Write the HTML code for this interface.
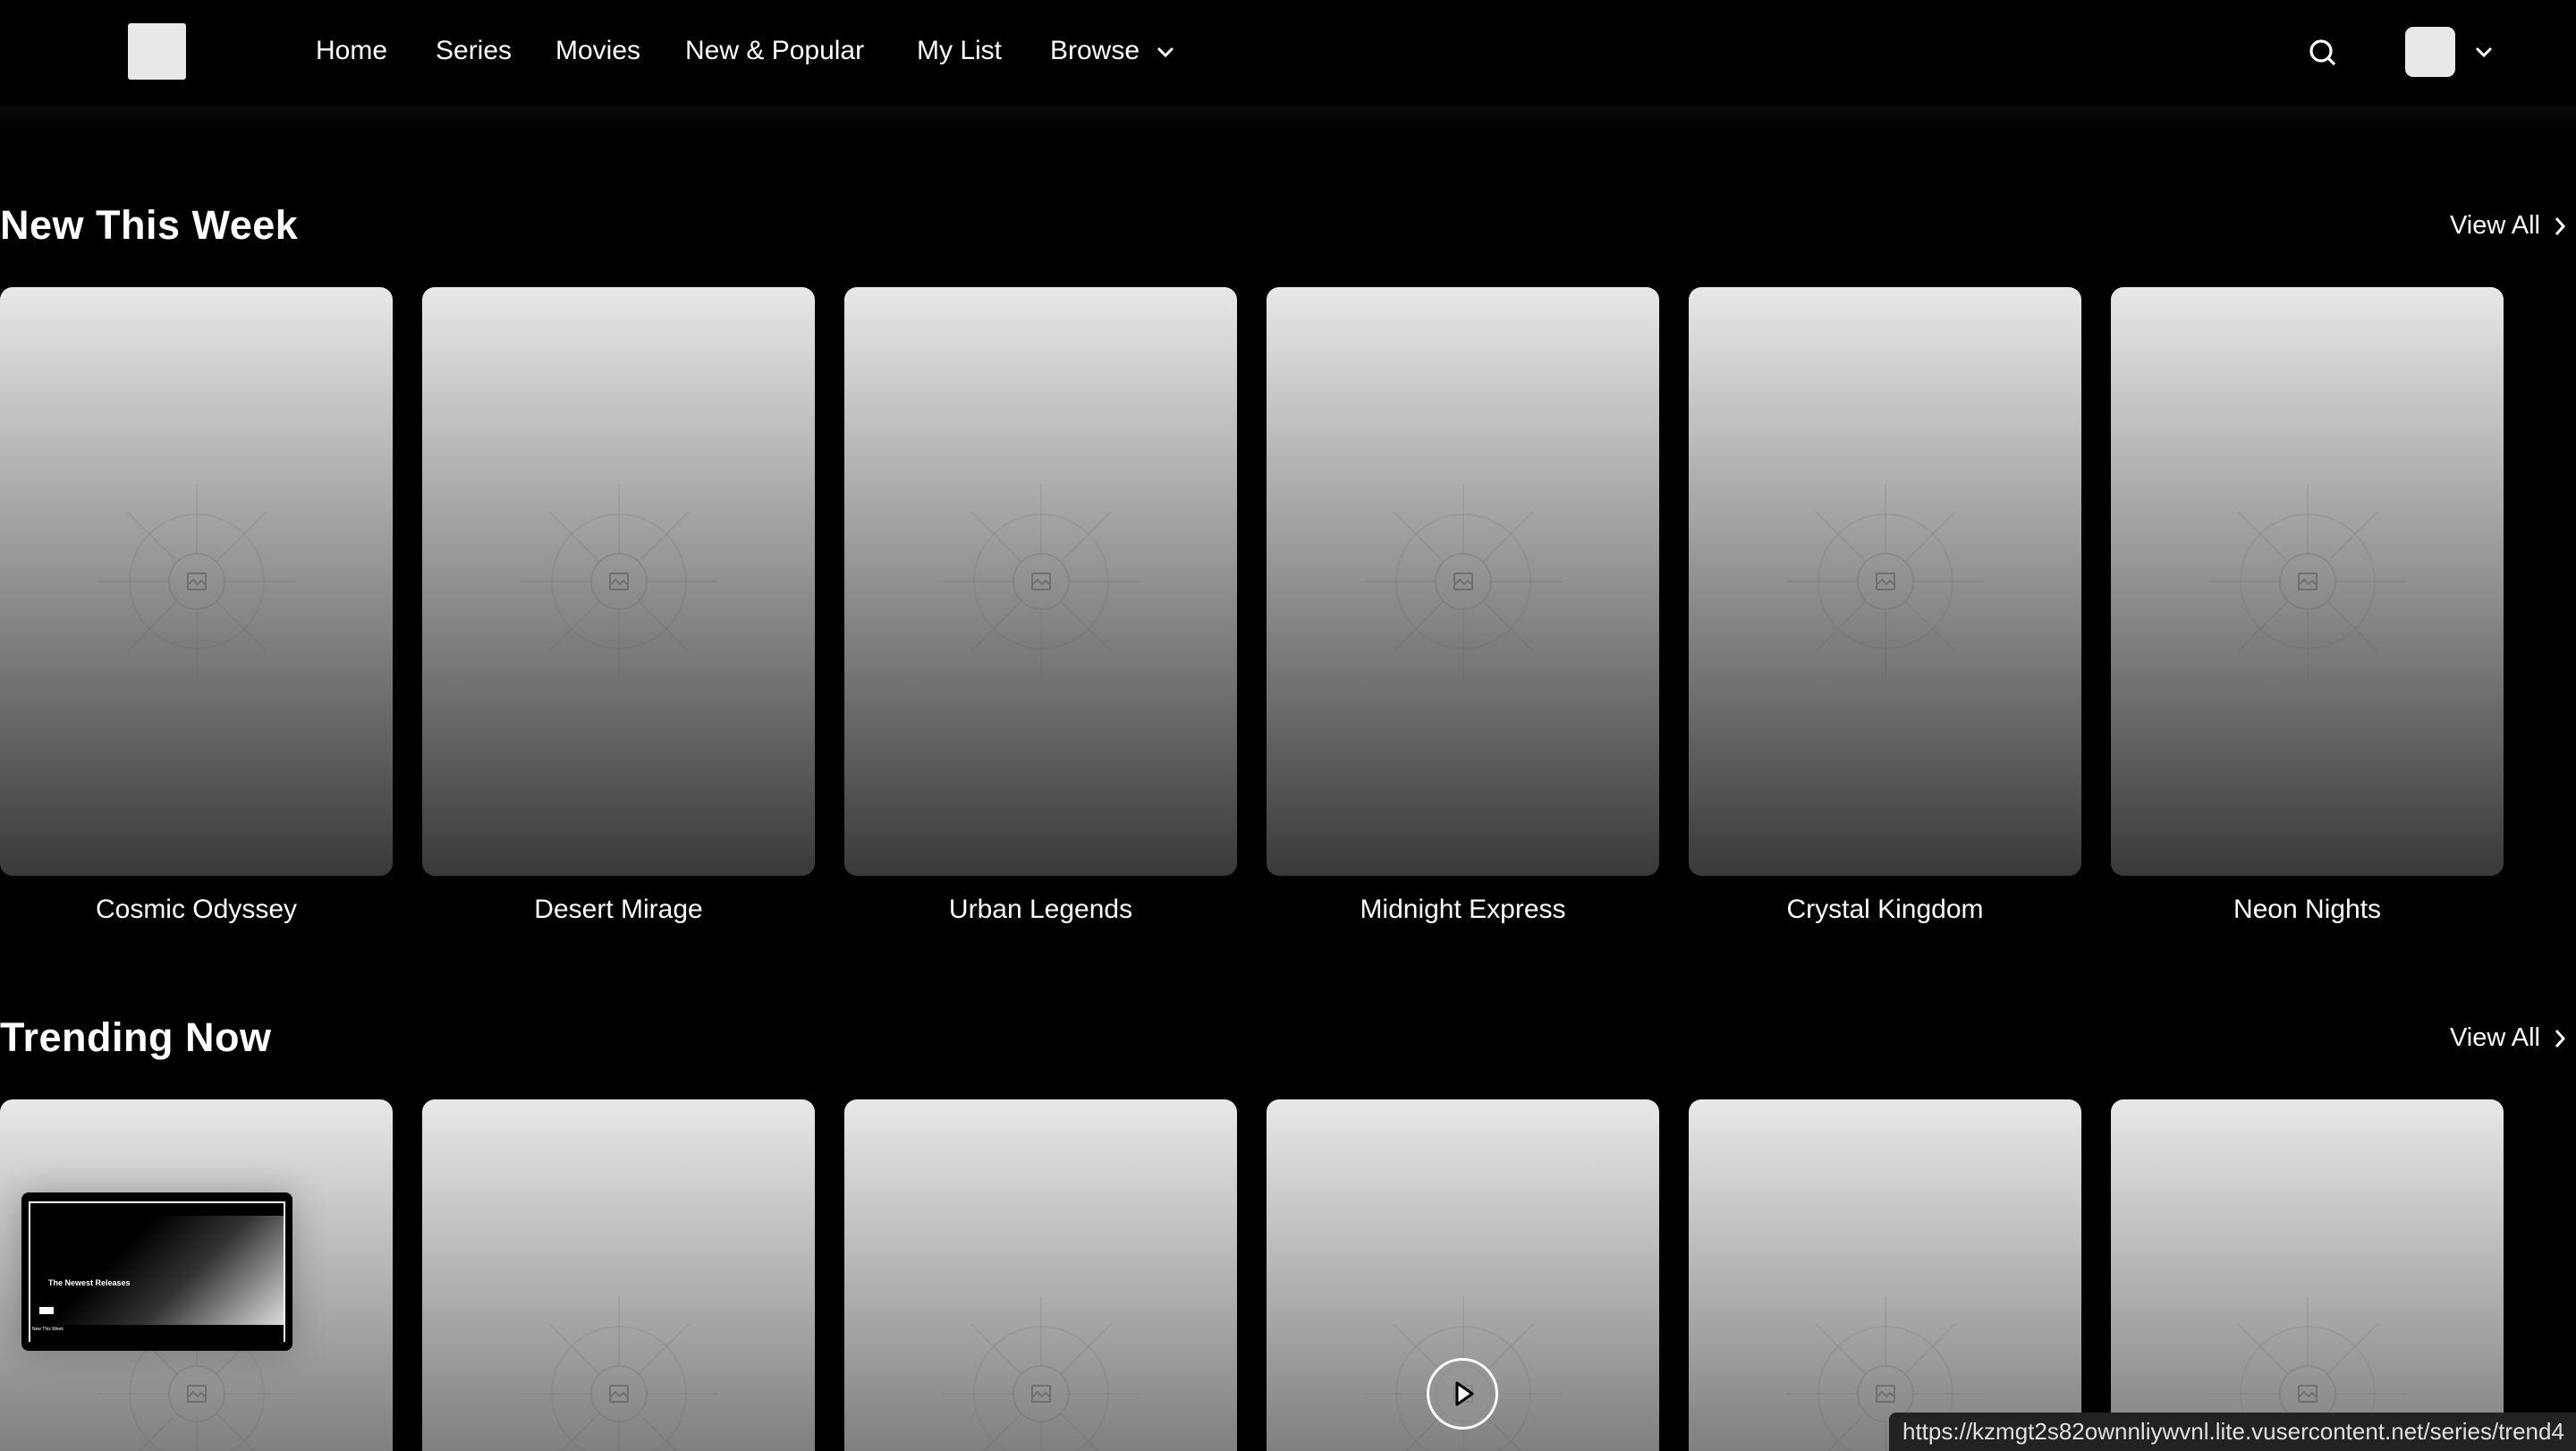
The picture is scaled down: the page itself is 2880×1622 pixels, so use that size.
<!DOCTYPE html>
<html><head><meta charset="utf-8"><style>
*{margin:0;padding:0;box-sizing:border-box}
html,body{width:2880px;height:1622px;background:#000;overflow:hidden;font-family:"Liberation Sans",sans-serif;color:#fff}
#wrap{position:relative;width:2880px;height:1622px;overflow:hidden;background:#000}
.hdr{position:absolute;left:0;top:0;width:2880px;height:118px;background:#000}
.shade{position:absolute;left:0;top:112px;width:2880px;height:40px;background:linear-gradient(#0a0a0a,#000)}
.logo{position:absolute;left:143px;top:26px;width:65px;height:63px;background:#e8e8e8;border-radius:3px}
.nav{position:absolute;top:38px;font-size:30px;line-height:38px;color:#fff}
.ttl{position:absolute;left:0;font-size:45px;font-weight:bold;letter-spacing:0.5px}
.va{position:absolute;right:40px;font-size:29px}
.chev{position:absolute}
.card{position:absolute;width:439px;height:658px;border-radius:14px;background:linear-gradient(#e8e8e8,#393939);background-size:439px 658px;background-repeat:no-repeat;overflow:hidden}
.card.b{height:393px;border-radius:14px 14px 0 0}
.card svg{position:absolute;left:0;top:0}
.name{position:absolute;width:439px;text-align:center;font-size:30px;top:1000px}
</style></head><body><div id="wrap">
<div class="shade"></div>
<div class="hdr"></div>
<div class="logo"></div>
<div class="nav" style="left:353px">Home</div>
<div class="nav" style="left:487px">Series</div>
<div class="nav" style="left:621px">Movies</div>
<div class="nav" style="left:766px">New &amp; Popular</div>
<div class="nav" style="left:1025px">My List</div>
<div class="nav" style="left:1174px">Browse</div>
<svg class="chev" style="left:1292px;top:48px" width="22" height="20" viewBox="0 0 22 20"><path d="M3 6l8 8 8-8" stroke="#fff" stroke-width="3" fill="none"/></svg>
<svg class="chev" style="left:2580px;top:42px" width="34" height="34" viewBox="0 0 34 34"><circle cx="15" cy="15" r="11" stroke="#fff" stroke-width="3.2" fill="none"/><path d="M23 23l7 7" stroke="#fff" stroke-width="3.2"/></svg>
<div style="position:absolute;left:2689px;top:30px;width:56px;height:56px;background:#e8e8e8;border-radius:9px"></div>
<svg class="chev" style="left:2765px;top:48px" width="24" height="20" viewBox="0 0 24 20"><path d="M4 6l8 8 8-8" stroke="#fff" stroke-width="3" fill="none"/></svg>

<div class="ttl" style="top:226px">New This Week</div>
<div class="va" style="top:236px">View All</div>
<svg class="chev" style="left:2852px;top:240px" width="20" height="26" viewBox="0 0 20 26"><path d="M6 4l8 9-8 9" stroke="#fff" stroke-width="3" fill="none"/></svg>

<div class="ttl" style="top:1134px">Trending Now</div>
<div class="va" style="top:1144px">View All</div>
<svg class="chev" style="left:2852px;top:1148px" width="20" height="26" viewBox="0 0 20 26"><path d="M6 4l8 9-8 9" stroke="#fff" stroke-width="3" fill="none"/></svg>

<div id="cards"></div>
<script>
var names=["Cosmic Odyssey","Desert Mirage","Urban Legends","Midnight Express","Crystal Kingdom","Neon Nights"];
var svg='<svg width="439" height="658" viewBox="0 0 439 658"><g stroke="rgba(90,90,90,0.12)" stroke-width="2" fill="none"><circle cx="220" cy="329" r="75"/><circle cx="220" cy="329" r="31" stroke="rgba(90,90,90,0.2)"/><path d="M220 220v78M220 360v78M110 329h79M251 329h79M142 251l56 56M242 351l56 56M298 251l-56 56M198 351l-56 56"/></g><g stroke="rgba(80,80,80,0.5)" stroke-width="2" fill="none"><rect x="210" y="320" width="20" height="18" rx="1"/><path d="M211 332l5-5 5 5 4-4 4 4"/></g></svg>';
var h='';
for(var r=0;r<2;r++){for(var i=0;i<6;i++){var x=i*472,y=r?1229:321;
h+='<div class="card'+(r?' b':'')+'" style="left:'+x+'px;top:'+y+'px">'+svg+'</div>';
if(!r)h+='<div class="name" style="left:'+x+'px">'+names[i]+'</div>';}}
document.getElementById('cards').innerHTML=h;
</script>
<div style="position:absolute;left:24px;top:1333px;width:303px;height:177px;background:#000;border-radius:8px;box-shadow:0 0 40px rgba(0,0,0,0.25)">
 <div style="position:absolute;left:8px;top:10px;width:287px;height:157px;border:2px solid #fff;background:linear-gradient(135deg,#000 35%,#333 60%,#eee 100%)">
  <div style="position:absolute;left:0;top:0;width:283px;height:14px;background:#000"></div>
  <div style="position:absolute;left:20px;top:84px;font-size:9px;font-weight:bold">The Newest Releases</div>
  <div style="position:absolute;left:10px;top:116px;width:16px;height:8px;background:#fff"></div>
  <div style="position:absolute;left:0;top:136px;width:283px;height:19px;background:#000"></div>
  <div style="position:absolute;left:2px;top:138px;font-size:5px">New This Week</div>
 </div>
</div>
<div style="position:absolute;left:1595px;top:1518px;width:80px;height:80px;border-radius:50%;border:3px solid #fff;background:rgba(150,150,150,0.6)"></div>
<svg class="chev" style="left:1620px;top:1541px" width="34" height="34" viewBox="0 0 34 34"><path d="M9 5l17 12-17 12z" stroke="#000" stroke-width="3" fill="#fff" stroke-linejoin="round"/></svg>
<div style="position:absolute;left:2112px;top:1579px;width:768px;height:43px;background:#202322;border-top-left-radius:8px;font-size:26px;line-height:43px;padding-left:15px;color:#e0e0e0;white-space:nowrap;overflow:hidden">https://kzmgt2s82ownnliywvnl.lite.vusercontent.net/series/trend4</div>
</div></body></html>
